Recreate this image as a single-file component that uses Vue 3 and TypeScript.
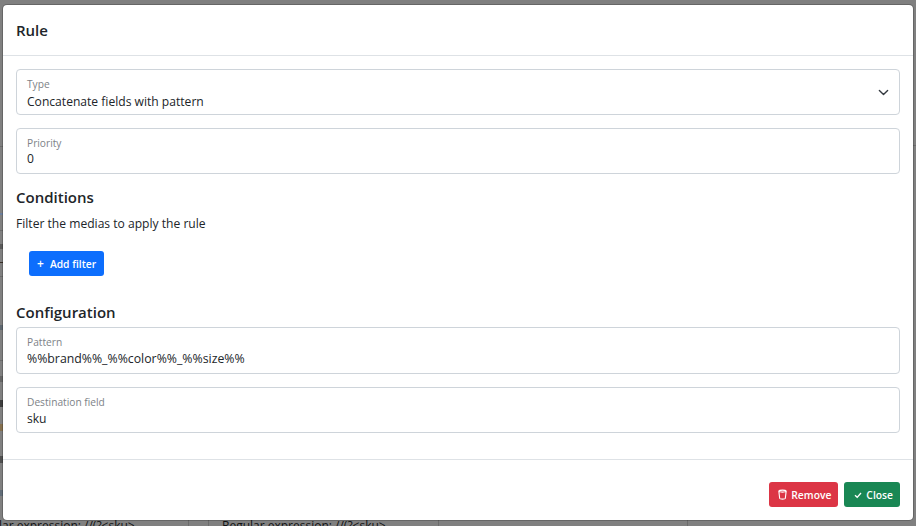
<script setup lang="ts">
const texts = [
  { x: -1, label: 'lar expression: //(?<sku>' },
  { x: 222, label: 'Regular expression: //(?<sku>' },
]
const lines = [188, 208, 438, 687]
const ticks = [
  { y: 146, h: 1, c: '#6c6c6c' },
  { y: 213, h: 2, c: '#6c7f9c' },
  { y: 230, h: 1, c: '#6c6c6c' },
  { y: 244, h: 5, c: '#5a5a5a' },
  { y: 262, h: 1, c: '#3a3026' },
  { y: 276, h: 1, c: '#6c6c6c' },
  { y: 325, h: 5, c: '#5f6870' },
  { y: 360, h: 1, c: '#6c6c6c' },
  { y: 376, h: 6, c: '#666666' },
  { y: 400, h: 7, c: '#3e3e3e' },
  { y: 424, h: 7, c: '#85704f' },
  { y: 456, h: 7, c: '#505050' },
  { y: 490, h: 6, c: '#626d78' },
]
</script>

<template>
  <div class="page">
    <div class="backdrop">
      <span v-for="t in texts" :key="t.x" class="bg-text" :style="{ left: t.x + 'px' }">{{ t.label }}</span>
      <i v-for="x in lines" :key="x" class="bg-line" :style="{ left: x + 'px' }"></i>
      <i v-for="t in ticks" :key="t.y" class="bg-tick" :style="{ top: t.y + 'px', height: t.h + 'px', background: t.c }"></i>
      <i class="bg-tick right"></i>
    </div>
    <section class="modal">
      <header class="modal-header">Rule</header>
      <div class="modal-body">
        <div class="field select">
          <label>Type</label>
          <div class="value">Concatenate fields with pattern</div>
          <svg class="chev" viewBox="0 0 16 16" width="11" height="11"><path d="m2 5 6 6 6-6" fill="none" stroke="#343a40" stroke-width="2" stroke-linecap="round" stroke-linejoin="round"/></svg>
        </div>
        <div class="field">
          <label>Priority</label>
          <div class="value">0</div>
        </div>
        <h5>Conditions</h5>
        <p>Filter the medias to apply the rule</p>
        <div class="add-row">
          <button class="btn blue"><span class="plus">+</span> Add filter</button>
        </div>
        <h5 class="config">Configuration</h5>
        <div class="field offset">
          <label>Pattern</label>
          <div class="value wide">%%brand%%_%%color%%_%%size%%</div>
        </div>
        <div class="field offset">
          <label>Destination field</label>
          <div class="value">sku</div>
        </div>
      </div>
      <footer class="modal-footer">
        <button class="btn red">
          <svg viewBox="0 0 9 11" width="9" height="11"><path d="M.7 1.8C1.5.9 7.5.9 8.3 1.8M.8 1.9l.9 7.6c.1.8 5.5.8 5.6 0l.9-7.6M.8 2.4c1.5.9 5.9.9 7.4 0" fill="none" stroke="#fff" stroke-width="1.1"/></svg>
          Remove
        </button>
        <button class="btn green">
          <svg viewBox="0 0 12 12" width="8" height="8"><path d="M1.5 6.5 4.8 9.5 10.5 3" fill="none" stroke="#fff" stroke-width="2"/></svg>
          Close
        </button>
      </footer>
    </section>
  </div>
</template>

<style>
html, body { margin: 0; background: #808080; }
</style>

<style scoped>
.page {
  width: 916px;
  height: 526px;
  position: relative;
  overflow: hidden;
  background: #808080;
  font-family: "Open Sans", "Noto Sans", sans-serif;
  color: #212529;
  padding: 4px 2px 0;
  box-sizing: border-box;
}
.backdrop { position: absolute; inset: 0; }
.bg-text { position: absolute; top: 517px; font-size: 12px; color: #111213; white-space: nowrap; }
.bg-line { position: absolute; top: 520px; bottom: 0; width: 1px; background: #6c6c6c; }
.bg-tick { position: absolute; left: 0; width: 3px; }
.bg-tick.right { left: 913px; top: 145px; height: 1px; background: #6c6c6c; }
.modal {
  position: relative;
  width: 912px;
  height: 517px;
  box-sizing: border-box;
  background: #fff;
  border: 1px solid rgba(0, 0, 0, 0.2);
  background-clip: padding-box;
  border-radius: 5px;
  display: flex;
  flex-direction: column;
}
.modal-header {
  height: 51px;
  flex: none;
  box-sizing: border-box;
  border-bottom: 1px solid #dee2e6;
  padding: 0 13px;
  display: flex;
  align-items: center;
  font-size: 15px;
  font-weight: 600;
}
.modal-body {
  flex: 1;
  padding: 13px 13px 0;
}
.field {
  position: relative;
  border: 1px solid #ced4da;
  border-radius: 4px;
  height: 46px;
  box-sizing: border-box;
  padding: 7px 10px 0;
  margin-bottom: 13px;
}
.field.offset { height: 46.4px; margin-bottom: 13.4px; }
.field label { display: block; font-size: 10.2px; line-height: 14px; color: #7d8287; }
.value { font-size: 12.1px; line-height: 17px; }
.select .value { margin-top: 2px; }
.offset .value { margin-top: 1px; }
.value.wide { font-size: 12.3px; }
.chev { position: absolute; right: 10px; top: 17px; }
h5 { margin: 0; font-size: 15px; line-height: 20px; font-weight: 600; }
p { margin: 8px 0 0; font-size: 12.1px; line-height: 17px; }
.add-row { padding: 19px 13px 0; line-height: 0; }
.config { margin-top: 26px; margin-bottom: 5.3px; }
.btn {
  border: 0;
  border-radius: 3px;
  height: 25px;
  padding: 0 8px;
  color: #fff;
  font: 600 10.3px "Open Sans", "Noto Sans", sans-serif;
  display: inline-flex;
  align-items: center;
  gap: 4px;
}
.blue { background: #0d6efd; }
.plus { font-size: 12px; margin-right: 2px; }
.red { background: #dc3545; padding: 0 7px 0 9px; }
.green { background: #198754; padding: 0 7px 0 9.5px; gap: 4.5px; }
.modal-footer {
  height: 61px;
  flex: none;
  box-sizing: border-box;
  border-top: 1px solid #dee2e6;
  padding: 0 13px 13px;
  display: flex;
  align-items: flex-end;
  justify-content: flex-end;
  gap: 6px;
}
</style>
